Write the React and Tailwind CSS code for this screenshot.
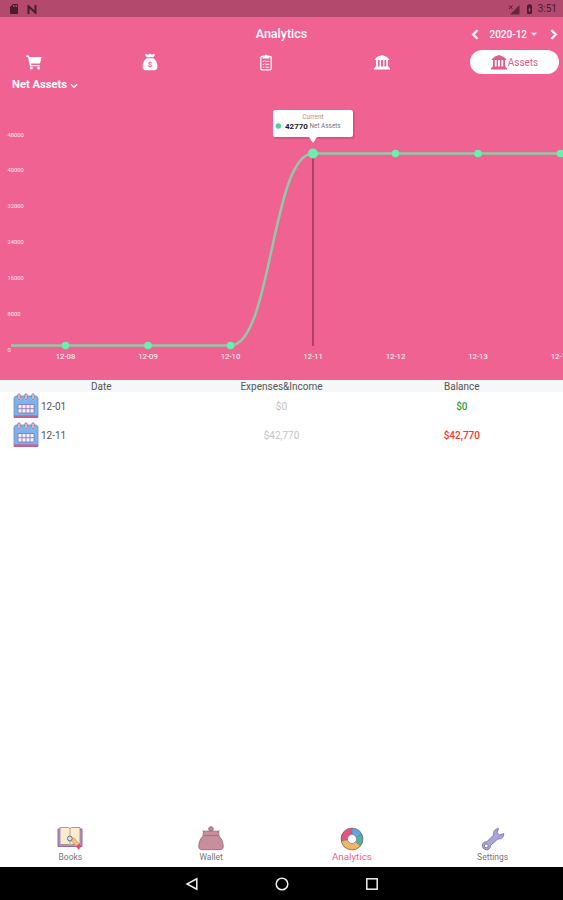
import React, { useState } from 'react';
import { MdArrowDropDown, MdSdCard, MdBatteryChargingFull } from 'react-icons/md';
import { FaChevronLeft, FaChevronRight, FaChevronDown } from 'react-icons/fa';

const points = [
    { x: 65.5, y: 250.5, label: '12-08' },
    { x: 148, y: 250.5, label: '12-09' },
    { x: 230.5, y: 250.5, label: '12-10' },
    { x: 313, y: 58.5, label: '12-11' },
    { x: 395.5, y: 58.5, label: '12-12' },
    { x: 478, y: 58.5, label: '12-13' },
    { x: 560.5, y: 58.5, label: '12-14' },
];

const ticks = [48000, 40000, 32000, 24000, 16000, 8000, 0];

const rows = [
    { date: '12-01', amount: '$0', balance: '$0', color: 'text-[#2fa043]' },
    { date: '12-11', amount: '$42,770', balance: '$42,770', color: 'text-[#f4362c]' },
];

const Cart = () => (
    <svg width="16" height="15" viewBox="0 0 16 15" fill="#fff">
        <path d="M0.3 0.6 H2.8 L3.4 2 H15.6 L14 8.6 H5 L5.2 10 H14 V11.3 H3.9 L2 1.9 H0.3 Z" />
        <circle cx="5.3" cy="13" r="1.5" />
        <circle cx="12.7" cy="13" r="1.5" />
    </svg>
);

const MoneyBag = () => (
    <svg width="16" height="18" viewBox="0 0 16 18">
        <path d="M4 0.8 L6 1.8 L8 0.6 L10 1.8 L12 0.8 L13 2 L11.2 4.2 H4.8 L3 2 Z" fill="#fff" />
        <path d="M4.6 5.2 H11.4 C14 7 15.4 10 15.4 13.6 C15.4 16 14.4 17.2 12.4 17.2 H3.6 C1.6 17.2 0.6 16 0.6 13.6 C0.6 10 2 7 4.6 5.2 Z" fill="#fff" />
        <text x="8" y="14.2" fontSize="8" fontWeight="700" textAnchor="middle" fill="#f06292">$</text>
    </svg>
);

const Clipboard = () => (
    <svg width="12" height="17" viewBox="0 0 12 17" fill="none" stroke="#fff">
        <rect x="0.8" y="2.3" width="10.4" height="13.6" rx="1.3" strokeWidth="1.2" />
        <path d="M2.6 1.8 H4.4 L6 0.2 L7.6 1.8 H9.4 V4.4 H2.6 Z" fill="#fff" stroke="none" />
        <path d="M2.6 7.2 L3.3 7.9 L4.4 6.5 M5.4 7.3 H9.3 M2.6 10.2 L3.3 10.9 L4.4 9.5 M5.4 10.3 H9.3 M2.8 13.2 H4.2 M5.4 13.2 H9.3" strokeWidth="0.9" />
    </svg>
);

const Bank = () => (
    <svg width="16" height="15" viewBox="0 0 16 15" fill="currentColor" className="shrink-0">
        <path d="M8 0 L12.6 1.8 L15.2 4.2 V5 H0.8 V4.2 L3.4 1.8 Z" />
        <path d="M2 5 H3.8 V12 H2 Z M5.6 5 H7 V12 H5.6 Z M9 5 H10.4 V12 H9 Z M12.2 5 H14 V12 H12.2 Z" />
        <path d="M1.2 11.6 H14.8 V12.8 H16 V14.4 H0 V12.8 H1.2 Z" />
    </svg>
);

const Calendar = () => (
    <svg width="26" height="26" viewBox="0 0 26 26" className="shrink-0">
        <path d="M2.5 3 H23.5 L25 5 V24.5 H1 V5 Z" fill="#7bb4ea" stroke="#6f8cc4" strokeWidth="0.8" />
        <path d="M1 22.4 H25 V25 H1 Z" fill="#c4618f" />
        <rect x="5" y="11.5" width="16" height="8.5" fill="#f5f0fa" />
        <path d="M5 11.5 H21 V20 H5 Z M9 11.5 V20 M13 11.5 V20 M17 11.5 V20 M5 15.7 H21" fill="none" stroke="#8270ae" strokeWidth="0.8" />
        {[6, 13, 20].map((x) => (
            <g key={x}>
                <circle cx={x} cy="5.6" r="2" fill="#b9c6ea" />
                <rect x={x - 1.2} y="0.8" width="2.4" height="5.8" rx="1.2" fill="#efccd2" stroke="#8d6f94" strokeWidth="0.8" />
            </g>
        ))}
    </svg>
);

const BooksIcon = () => (
    <svg width="26" height="25" viewBox="0 0 26 25">
        <path d="M1 3 H25 V20.5 H1 Z" fill="#b696cc" stroke="#82619b" strokeWidth="0.9" />
        <path d="M3 1.5 H11.5 L13 2.6 L14.5 1.5 H23 V18.5 H14.5 L13 19.5 L11.5 18.5 H3 Z" fill="#fdebd0" stroke="#9c7d91" strokeWidth="0.8" />
        <path d="M13 2.6 V19.5" stroke="#a98c8c" strokeWidth="0.8" />
        <path d="M13.5 14 L16.5 11.5 L22.5 18 L19.5 20.8 Z" fill="#f2c56a" stroke="#a78062" strokeWidth="0.5" />
        <path d="M18.8 20.3 L22.5 17.5 L24.4 20.5 L21.5 23.8 Z" fill="#e04f80" />
        <circle cx="12.8" cy="12.5" r="2.4" fill="#dfe2ee" stroke="#66718b" strokeWidth="1" />
    </svg>
);

const WalletIcon = () => (
    <svg width="26" height="25" viewBox="0 0 26 25" stroke="#9a6a80" strokeWidth="0.9">
        <circle cx="13" cy="3" r="2.3" fill="#c48a98" />
        <path d="M5.5 5.2 H20.5 L21 10 C24 13 25.3 17 25.2 21 C25 23 24 23.7 22 23.7 H4 C2 23.7 1 23 0.8 21 C0.7 17 2 13 5 10 Z" fill="#c98e9d" />
        <path d="M5.5 9.6 H20.5 M5.5 5.4 L4.2 4.6 M20.5 5.4 L21.8 4.6" fill="none" />
    </svg>
);

const DonutIcon = () => (
    <svg width="24" height="24" viewBox="0 0 24 24" fill="none" strokeWidth="6.4">
        <path d="M4.2 13.4 A7.9 7.9 0 0 1 12.2 4.1" stroke="#e2557f" />
        <path d="M12.2 4.1 A7.9 7.9 0 0 1 19.2 8.8" stroke="#5ba9e4" />
        <path d="M19.2 8.8 A7.9 7.9 0 0 1 18.2 17" stroke="#4fb396" />
        <path d="M18.2 17 A7.9 7.9 0 0 1 4.2 13.4" stroke="#f0b664" />
        <circle cx="12" cy="12" r="10.9" stroke="#6b667c" strokeWidth="0.7" />
        <path d="M12.2 1 V7.3 M1 14 L7.5 12.8 M16.2 10 L22 7.4 M16 15 L20.6 19" stroke="#6b667c" strokeWidth="0.7" />
        <circle cx="12" cy="12" r="4.5" stroke="#6b667c" strokeWidth="0.7" />
    </svg>
);

const WrenchIcon = () => (
    <svg width="24" height="24" viewBox="0 0 24 24">
        <path
            d="M17.5 1.5 L16 5.8 L18.5 8 L22.7 6.6 C23 10 20.5 12.5 16.8 12 L9.5 18.5 C9.6 21 7.8 23 5.3 22.8 C2.6 22.6 1 20.5 1.4 18 C1.8 15.7 3.6 14.6 5.8 14.8 L12.6 8 C12 4.5 14 1.8 17.5 1.5 Z"
            fill="#aaa5da"
            stroke="#77769f"
            strokeWidth="0.9"
        />
        <circle cx="5.3" cy="18.9" r="1.9" fill="#fff" stroke="#77769f" strokeWidth="0.9" />
    </svg>
);

const navItems = [
    { name: 'Books', icon: <BooksIcon /> },
    { name: 'Wallet', icon: <WalletIcon /> },
    { name: 'Analytics', icon: <DonutIcon /> },
    { name: 'Settings', icon: <WrenchIcon /> },
];

const StatusBar = () => (
    <div className="h-[17px] shrink-0 bg-[#b34a6d] flex items-center pt-px px-2 text-[#4b1b2f]">
        <MdSdCard className="w-[12px] h-[12px]" />
        <svg className="ml-[7px]" width="10" height="9" viewBox="0 0 10 9" fill="none" stroke="currentColor" strokeWidth="2">
            <path d="M1.5 9 V1.2 L8.5 7.8 V0" />
        </svg>
        <div className="ml-auto flex items-center">
            <svg width="12" height="11" viewBox="0 0 12 11">
                <path d="M11.5 1 V10.5 H2 Z" fill="currentColor" opacity="0.75" />
                <path d="M1 1.5 L4.5 5 M4.5 1.5 L1 5" stroke="currentColor" />
            </svg>
            <MdBatteryChargingFull className="ml-[3px] w-[13px] h-[12px]" />
            <span className="ml-[2px] mr-[-2px] text-[10px] leading-none">3:51</span>
        </div>
    </div>
);

const Chart = () => (
    <svg width="563" height="285" viewBox="0 0 563 285" className="block">
        {ticks.map((tick, i) => (
            <text key={tick} x="7.5" y={41.5 + i * 35.9} fontSize="5.8" fill="#fff" fillOpacity="0.9">{tick}</text>
        ))}
        <path d="M313 58 V251" stroke="#a9436c" strokeWidth="2" />
        <path
            d="M11 250.5 H230.5 C271.7 250.5 271.7 58.5 313 58.5 H563"
            fill="none"
            stroke="#8dcba9"
            strokeWidth="2.5"
        />
        {points.map((p) => (
            <g key={p.label}>
                <circle cx={p.x} cy={p.y} r={p.label === '12-11' ? 5 : 3.8} fill="#69f0ae" />
                <text x={p.x} y="263.5" fontSize="7.8" fill="#fff" textAnchor="middle">{p.label}</text>
            </g>
        ))}
        <rect x="274" y="16" width="81" height="28" rx="3" fill="#b8436e" opacity="0.4" />
        <path d="M275.5 15 H350.5 Q353 15 353 17.5 V39.5 Q353 42 350.5 42 H317 L313 48 L309 42 H275.5 Q273 42 273 39.5 V17.5 Q273 15 275.5 15 Z" fill="#fff" />
        <text x="313" y="24" fontSize="6.5" fill="#999" textAnchor="middle">Current</text>
        <circle cx="278.3" cy="31" r="2.8" fill="#55cf98" />
        <text x="285" y="33.5" fontSize="8" fontWeight="700" fill="#222">42770</text>
        <text x="309.5" y="33.2" fontSize="6.4" fill="#777">Net Assets</text>
    </svg>
);

const App = () => {
    const [active, setActive] = useState('Analytics');

    return (
        <div className="w-[563px] h-[900px] overflow-hidden flex flex-col bg-white font-['Roboto',sans-serif]">
            <StatusBar />
            <div className="h-[363px] shrink-0 bg-[#f06292] text-white">
                <div className="h-[33px] pt-px grid grid-cols-3 items-center">
                    <h1 className="col-start-2 text-center text-[12.5px] font-medium">Analytics</h1>
                    <div className="flex items-center justify-end pr-[4px]">
                        <FaChevronLeft className="w-[10px] h-[11px]" stroke="currentColor" strokeWidth="30" />
                        <span className="ml-[10px] text-[10px] font-medium">2020-12</span>
                        <MdArrowDropDown className="w-[14px] h-[14px]" />
                        <FaChevronRight className="ml-[8px] w-[10px] h-[11px]" stroke="currentColor" strokeWidth="30" />
                    </div>
                </div>
                <div className="h-6 flex items-center justify-between pl-4 pr-1">
                    <div className="w-[384px] flex items-center justify-between">
                        <div className="w-9 flex justify-center"><Cart /></div>
                        <div className="w-9 flex justify-center"><MoneyBag /></div>
                        <div className="w-9 flex justify-center"><Clipboard /></div>
                        <div className="w-9 flex justify-center"><Bank /></div>
                    </div>
                    <button className="w-[89px] h-6 rounded-full bg-white text-[#e05c8b] flex items-center justify-center text-[10px]">
                        <Bank />
                        <span className="ml-px">Assets</span>
                    </button>
                </div>
                <div className="h-[21px] flex items-center pt-[2px] pl-3 text-[11.2px] font-bold">
                    Net Assets
                    <FaChevronDown className="ml-[3px] w-[8px] h-[8px]" />
                </div>
                <Chart />
            </div>

            <div className="flex-1 text-[#555]">
                <div className="h-[12px] pt-px px-[11px] bg-[#f5f7f8] grid grid-cols-3 items-center text-center text-[10px] leading-none">
                    <span>Date</span>
                    <span>Expenses&amp;Income</span>
                    <span>Balance</span>
                </div>
                {rows.map((row) => (
                    <div key={row.date} className="h-[28.8px] px-[11px] grid grid-cols-3 items-center text-center text-[10px]">
                        <div className="flex items-center gap-[2px] pl-[2px]">
                            <Calendar />
                            <span>{row.date}</span>
                        </div>
                        <span className="text-[#c4c4c4]">{row.amount}</span>
                        <span className={`font-medium ${row.color}`}>{row.balance}</span>
                    </div>
                ))}
            </div>

            <div className="h-[44px] shrink-0 grid grid-cols-4">
                {navItems.map((item) => (
                    <button
                        key={item.name}
                        onClick={() => setActive(item.name)}
                        className={`flex flex-col items-center ${active === item.name ? 'text-[#f06292] text-[9.8px]' : 'text-[#777] text-[8.5px]'}`}
                    >
                        <span className="h-[28px] flex items-end">{item.icon}</span>
                        <span className="mt-[1px] h-[10px] leading-[10px]">{item.name}</span>
                    </button>
                ))}
            </div>

            <div className="h-[33px] shrink-0 bg-black flex items-center justify-center">
                <svg width="196" height="14" viewBox="0 0 196 14" fill="none" stroke="#eee" strokeWidth="1.5">
                    <path d="M12.8 1.8 V12.2 L3 7 Z" />
                    <circle cx="98" cy="7" r="5.8" />
                    <rect x="182.8" y="1.8" width="10.4" height="10.4" />
                </svg>
            </div>
        </div>
    );
};

export default App;
